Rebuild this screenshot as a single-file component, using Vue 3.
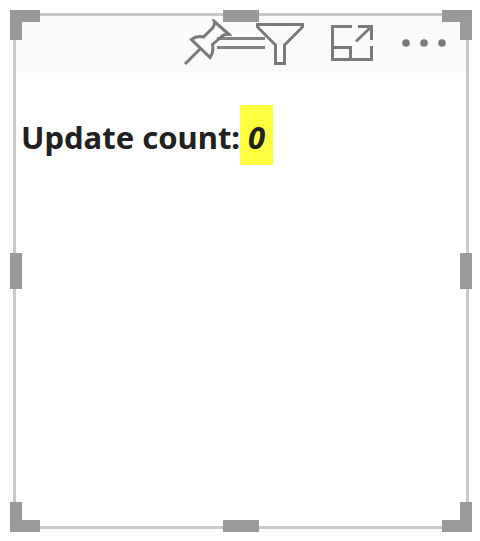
<script setup>
import { ref } from 'vue'

const updateCount = ref(0)
const handles = ['nw', 'n', 'ne', 'e', 'se', 's', 'sw', 'w']
</script>

<template>
  <main class="canvas">
    <section class="visual">
      <header class="toolbar">
        <button class="tool" type="button" aria-label="Pin visual">
          <svg class="icon" viewBox="0 0 48 48">
            <path d="M1 45L16 30M30.3 2.5L45 15.3Q40 15 37 18L28.5 25.5Q30 33 26 38.5L7.5 20.5Q13 16 19.5 18L29 8.5Q31 5 30.3 2.5Z" />
          </svg>
        </button>
        <span class="grip"></span>
        <button class="tool" type="button" aria-label="Filters">
          <svg class="icon" viewBox="0 0 48 48">
            <path d="M1.5 5.5H46.5V8L28.5 26V44.5H19.5V26L1.5 8Z" />
          </svg>
        </button>
        <button class="tool" type="button" aria-label="Focus mode">
          <svg class="icon" viewBox="0 0 48 48">
            <path d="M24 7.5H4.5V40.5H43.5V27M4.5 28.5H22.5V40.5M30 7.5H43.5V21M28 22.5L43 8" />
          </svg>
        </button>
        <button class="tool" type="button" aria-label="More options">
          <svg class="icon dots" viewBox="0 0 48 48">
            <circle cx="6" cy="24" r="3.8" />
            <circle cx="24" cy="24" r="3.8" />
            <circle cx="42" cy="24" r="3.8" />
          </svg>
        </button>
      </header>
      <p class="message">
        <span>Update count:</span><em class="count">{{ updateCount }}</em>
      </p>
      <span v-for="h in handles" :key="h" class="handle" :class="h"></span>
    </section>
  </main>
</template>

<style>
body {
  margin: 0;
  background: #fff;
}
</style>

<style scoped>
.canvas {
  box-sizing: border-box;
  min-height: 100vh;
  padding: 13px 11px 12px 13px;
  display: flex;
  font-family: "Noto Sans", "Open Sans", sans-serif;
  color: #212121;
}
.visual {
  position: relative;
  flex: 1;
  border: 3px solid #c8c8c8;
}
.toolbar {
  position: relative;
  display: flex;
  justify-content: flex-end;
  gap: 24px;
  padding: 3px 18px 6px;
  background: #fafafa;
}
.tool {
  width: 48px;
  height: 48px;
  padding: 0;
  border: 0;
  background: none;
}
.icon {
  display: block;
  width: 48px;
  height: 48px;
  fill: none;
  stroke: #7a7a7a;
  stroke-width: 3;
}
.dots {
  fill: #7a7a7a;
  stroke: none;
}
.grip {
  box-sizing: border-box;
  position: absolute;
  top: 21px;
  left: 50%;
  width: 48px;
  height: 12px;
  border: solid #777;
  border-width: 3px 0;
  opacity: 0.9;
  transform: translateX(-50%);
}
.message {
  display: flex;
  margin: 32px 0 0;
  padding-left: 5px;
  font-size: 31px;
  font-weight: 700;
  line-height: 56px;
  white-space: nowrap;
}
.message > * {
  padding-top: 4px;
}
.message > .count {
  padding-left: 8px;
  padding-right: 8px;
  background: #ffff40;
}
.handle {
  position: absolute;
  box-sizing: border-box;
  width: 30px;
  height: 30px;
  border: 0 solid #999;
}
.nw { top: -6px; left: -6px; border-width: 12px 0 0 12px; }
.ne { top: -6px; right: -6px; border-width: 12px 12px 0 0; }
.se { bottom: -6px; right: -6px; border-width: 0 12px 12px 0; }
.sw { bottom: -6px; left: -6px; border-width: 0 0 12px 12px; }
.n, .s {
  left: 50%;
  width: 36px;
  height: 12px;
  background: #999;
  transform: translateX(-50%);
}
.n { top: -6px; }
.s { bottom: -6px; }
.e, .w {
  top: 50%;
  width: 12px;
  height: 36px;
  background: #999;
  transform: translateY(-50%);
}
.e { right: -6px; }
.w { left: -6px; }
</style>
